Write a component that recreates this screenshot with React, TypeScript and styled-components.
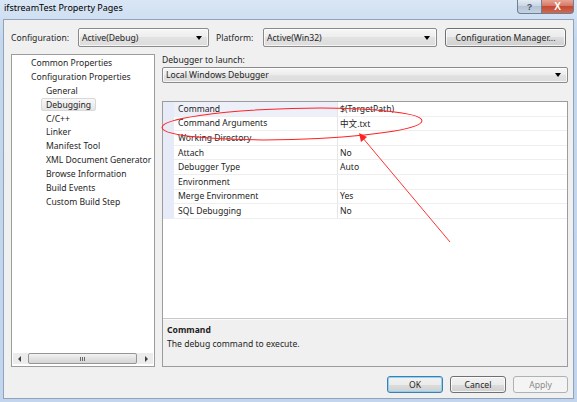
import React from "react";
import styled, { createGlobalStyle, css } from "styled-components";

const GlobalStyle = createGlobalStyle`
  html, body {
    margin: 0;
    padding: 0;
    background: #ffffff;
  }
  body {
    font-family: "Noto Sans", "Noto Sans CJK SC", sans-serif;
    font-size: 8.6px;
    color: #000;
  }
  * {
    box-sizing: border-box;
  }
`;

const Window = styled.div`
  position: relative;
  width: 577px;
  height: 402px;
  display: flex;
  flex-direction: column;
  background: linear-gradient(#d9e6f5, #c4d7ed 40px, #c2d5ec);
  overflow: hidden;
`;

const TitleBar = styled.div`
  height: 19px;
  display: flex;
  align-items: flex-start;
`;

const TitleText = styled.div`
  padding: 2px 0 0 4px;
  font-size: 9px;
  line-height: 12px;
  color: #000;
`;

const CaptionButtons = styled.div`
  margin-left: auto;
  margin-right: 3px;
  display: flex;
`;

const CaptionButton = styled.div<{ kind: "help" | "close" }>`
  height: 14px;
  display: flex;
  align-items: center;
  justify-content: center;
  font-family: "Liberation Sans", sans-serif;
  font-weight: bold;
  border: 1px solid #6f7f92;
  border-top: none;
  ${(p) =>
    p.kind === "help"
      ? css`
          width: 25px;
          border-radius: 0 0 0 4px;
          background: linear-gradient(#e3eaf3, #c8d4e2 50%, #b4c3d6 50%, #c6d3e2);
          color: #4a5563;
          font-size: 9px;
        `
      : css`
          width: 32px;
          border-left: none;
          border-radius: 0 0 4px 0;
          background: linear-gradient(#e8a494, #d47362 50%, #c34a33 50%, #cf6a52);
          color: #fff;
          font-size: 10px;
        `}
`;

const Client = styled.div`
  flex: 1;
  margin: 0 3px 3px 3px;
  background: #f0f0f0;
  border: 1px solid #8fa3bc;
  padding: 8px 5px 5px 7px;
  display: flex;
  flex-direction: column;
`;

const TopRow = styled.div`
  height: 19px;
  display: flex;
  align-items: center;
`;

const Label = styled.div<{ w: number; ml?: number }>`
  width: ${(p) => p.w}px;
  margin-left: ${(p) => p.ml ?? 0}px;
  white-space: nowrap;
  color: #1e1e1e;
`;

const Select = styled.div<{ w?: number; h: number }>`
  flex: none;
  width: ${(p) => (p.w ? `${p.w}px` : "100%")};
  height: ${(p) => p.h}px;
  border: 1px solid #8a8a8a;
  border-radius: 2px;
  background: linear-gradient(#f7f7f7, #ececec 50%, #e2e2e2 50%, #dcdcdc);
  display: flex;
  align-items: center;
  padding: 0 6px 0 3px;
  color: #1e1e1e;
  box-shadow: inset 0 0 0 1px rgba(255, 255, 255, 0.7);
`;

const SelectText = styled.span`
  flex: 1;
  white-space: nowrap;
`;

const DropArrow = styled.span`
  width: 0;
  height: 0;
  border-left: 3px solid transparent;
  border-right: 3px solid transparent;
  border-top: 4px solid #000;
`;

const Button = styled.div<{ w: number; ml?: number; variant?: "default" | "disabled" }>`
  width: ${(p) => p.w}px;
  margin-left: ${(p) => p.ml ?? 0}px;
  height: 100%;
  display: flex;
  align-items: center;
  justify-content: center;
  border: 1px solid #707070;
  border-radius: 3px;
  background: linear-gradient(#f2f2f2, #ebebeb 50%, #dddddd 50%, #cfcfcf);
  box-shadow: inset 0 0 0 1px rgba(255, 255, 255, 0.75);
  color: #1e1e1e;
  white-space: nowrap;
  ${(p) =>
    p.variant === "default" &&
    css`
      border-color: #3c7fb1;
      box-shadow: inset 0 0 0 1px #8fd1f5;
    `}
  ${(p) =>
    p.variant === "disabled" &&
    css`
      border-color: #adb2b5;
      background: #f4f4f4;
      box-shadow: none;
      color: #8a8a8a;
    `}
`;

const Body = styled.div`
  margin-top: 7px;
  height: 313px;
  display: flex;
`;

const TreePanel = styled.div`
  width: 144px;
  border: 1px solid #9c9c9c;
  background: #fff;
  display: flex;
  flex-direction: column;
`;

const TreeList = styled.div`
  flex: 1;
  padding-top: 1px;
`;

const TreeItem = styled.div<{ level: number }>`
  height: 13.9px;
  display: flex;
  align-items: center;
  padding-left: ${(p) => (p.level === 1 ? 14 : 29)}px;
  white-space: nowrap;
  color: #1e1e1e;
`;

const TreeLabel = styled.span<{ selected?: boolean }>`
  padding: 0 4px;
  height: 13px;
  display: flex;
  align-items: center;
  border: 1px solid transparent;
  border-radius: 2px;
  ${(p) =>
    p.selected &&
    css`
      border-color: #d9d9d9;
      background: linear-gradient(#f8f8f8, #e5e5e5);
    `}
`;

const HScroll = styled.div`
  height: 11px;
  margin: 0 1px 2px 1px;
  display: flex;
  align-items: stretch;
  background: #ececec;
`;

const ScrollArrow = styled.div<{ dir: "left" | "right" }>`
  width: 14px;
  display: flex;
  align-items: center;
  justify-content: center;
  &::before {
    content: "";
    width: 0;
    height: 0;
    border-top: 3px solid transparent;
    border-bottom: 3px solid transparent;
    ${(p) =>
      p.dir === "left"
        ? "border-right: 3px solid #404040;"
        : "border-left: 3px solid #404040;"}
  }
`;

const ScrollThumb = styled.div`
  width: 110px;
  margin: 0 2px 0 1px;
  border: 1px solid #959595;
  border-radius: 2px;
  background: linear-gradient(#f3f3f3, #e2e2e2 50%, #d6d6d6);
  display: flex;
  align-items: center;
  justify-content: center;
  gap: 1px;
`;

const Grip = styled.span`
  width: 1px;
  height: 4px;
  background: #6a6a6a;
`;

const RightPane = styled.div`
  flex: 1;
  margin-left: 7px;
  display: flex;
  flex-direction: column;
`;

const SmallLabel = styled.div`
  height: 13px;
  line-height: 12px;
  color: #1e1e1e;
`;

const GridBox = styled.div`
  flex: 1;
  margin-top: 18px;
  border: 1px solid #9c9c9c;
  display: flex;
  flex-direction: column;
`;

const GridRows = styled.div`
  flex: 1;
  background: #fff;
`;

const GridRow = styled.div`
  height: 14.6px;
  display: grid;
  grid-template-columns: 11px 163px 1fr;
`;

const Gutter = styled.div`
  background: #e7eaf7;
`;

const Cell = styled.div<{ value?: boolean; active?: boolean }>`
  display: flex;
  align-items: center;
  padding-left: ${(p) => (p.value ? 2 : 4)}px;
  border-bottom: 1px solid #eeeeee;
  ${(p) => p.value && "border-left: 1px solid #e6e6e6;"}
  ${(p) => p.active && "background: #eef0f9;"}
  white-space: nowrap;
  color: #1e1e1e;
`;

const Description = styled.div`
  height: 48px;
  border-top: 1px solid #c8c8c8;
  box-shadow: inset 0 1px 0 #fbfbfb;
  background: #f0f0f0;
  padding: 4px 4px 0 4px;
  line-height: 14px;
  color: #1e1e1e;
`;

const DescTitle = styled.div`
  font-weight: bold;
`;

const ButtonRow = styled.div`
  margin-top: 9px;
  height: 17px;
  display: flex;
  justify-content: flex-end;
  gap: 7px;
`;

const Annotation = styled.svg`
  position: absolute;
  left: 0;
  top: 0;
  pointer-events: none;
`;

const treeItems: { text: string; level: number; selected?: boolean }[] = [
  { text: "Common Properties", level: 1 },
  { text: "Configuration Properties", level: 1 },
  { text: "General", level: 2 },
  { text: "Debugging", level: 2, selected: true },
  { text: "C/C++", level: 2 },
  { text: "Linker", level: 2 },
  { text: "Manifest Tool", level: 2 },
  { text: "XML Document Generator", level: 2 },
  { text: "Browse Information", level: 2 },
  { text: "Build Events", level: 2 },
  { text: "Custom Build Step", level: 2 },
];

const properties: [string, string][] = [
  ["Command", "$(TargetPath)"],
  ["Command Arguments", "中文.txt"],
  ["Working Directory", ""],
  ["Attach", "No"],
  ["Debugger Type", "Auto"],
  ["Environment", ""],
  ["Merge Environment", "Yes"],
  ["SQL Debugging", "No"],
];

const App = () => {
  return (
    <>
      <GlobalStyle />
      <Window>
        <TitleBar>
          <TitleText>ifstreamTest Property Pages</TitleText>
          <CaptionButtons>
            <CaptionButton kind="help">?</CaptionButton>
            <CaptionButton kind="close">X</CaptionButton>
          </CaptionButtons>
        </TitleBar>
        <Client>
          <TopRow>
            <Label w={67}>Configuration:</Label>
            <Select w={131} h={19}>
              <SelectText>Active(Debug)</SelectText>
              <DropArrow />
            </Select>
            <Label w={47} ml={7}>
              Platform:
            </Label>
            <Select w={174} h={19}>
              <SelectText>Active(Win32)</SelectText>
              <DropArrow />
            </Select>
            <Button w={121} ml={8}>
              Configuration Manager...
            </Button>
          </TopRow>
          <Body>
            <TreePanel>
              <TreeList>
                {treeItems.map((item) => (
                  <TreeItem key={item.text} level={item.level}>
                    <TreeLabel selected={item.selected}>{item.text}</TreeLabel>
                  </TreeItem>
                ))}
              </TreeList>
              <HScroll>
                <ScrollArrow dir="left" />
                <ScrollThumb>
                  <Grip />
                  <Grip />
                  <Grip />
                </ScrollThumb>
                <ScrollArrow dir="right" />
              </HScroll>
            </TreePanel>
            <RightPane>
              <SmallLabel>Debugger to launch:</SmallLabel>
              <Select h={16}>
                <SelectText>Local Windows Debugger</SelectText>
                <DropArrow />
              </Select>
              <GridBox>
                <GridRows>
                  {properties.map(([name, value], i) => (
                    <GridRow key={name}>
                      <Gutter />
                      <Cell active={i === 0}>{name}</Cell>
                      <Cell value>{value}</Cell>
                    </GridRow>
                  ))}
                </GridRows>
                <Description>
                  <DescTitle>Command</DescTitle>
                  <div>The debug command to execute.</div>
                </Description>
              </GridBox>
            </RightPane>
          </Body>
          <ButtonRow>
            <Button w={56} variant="default">
              OK
            </Button>
            <Button w={56}>Cancel</Button>
            <Button w={55} variant="disabled">
              Apply
            </Button>
          </ButtonRow>
        </Client>
        <Annotation width={577} height={402} viewBox="0 0 577 402">
          <ellipse
            cx={292}
            cy={124}
            rx={130}
            ry={15.5}
            fill="none"
            stroke="#f22"
            strokeWidth={1}
            transform="rotate(-1.5 292 124)"
          />
          <line x1={450} y1={242} x2={362} y2={137} stroke="#f33" strokeWidth={1} />
          <polygon points="359,133 367,137 361,142" fill="#f22" />
        </Annotation>
      </Window>
    </>
  );
};

export default App;
